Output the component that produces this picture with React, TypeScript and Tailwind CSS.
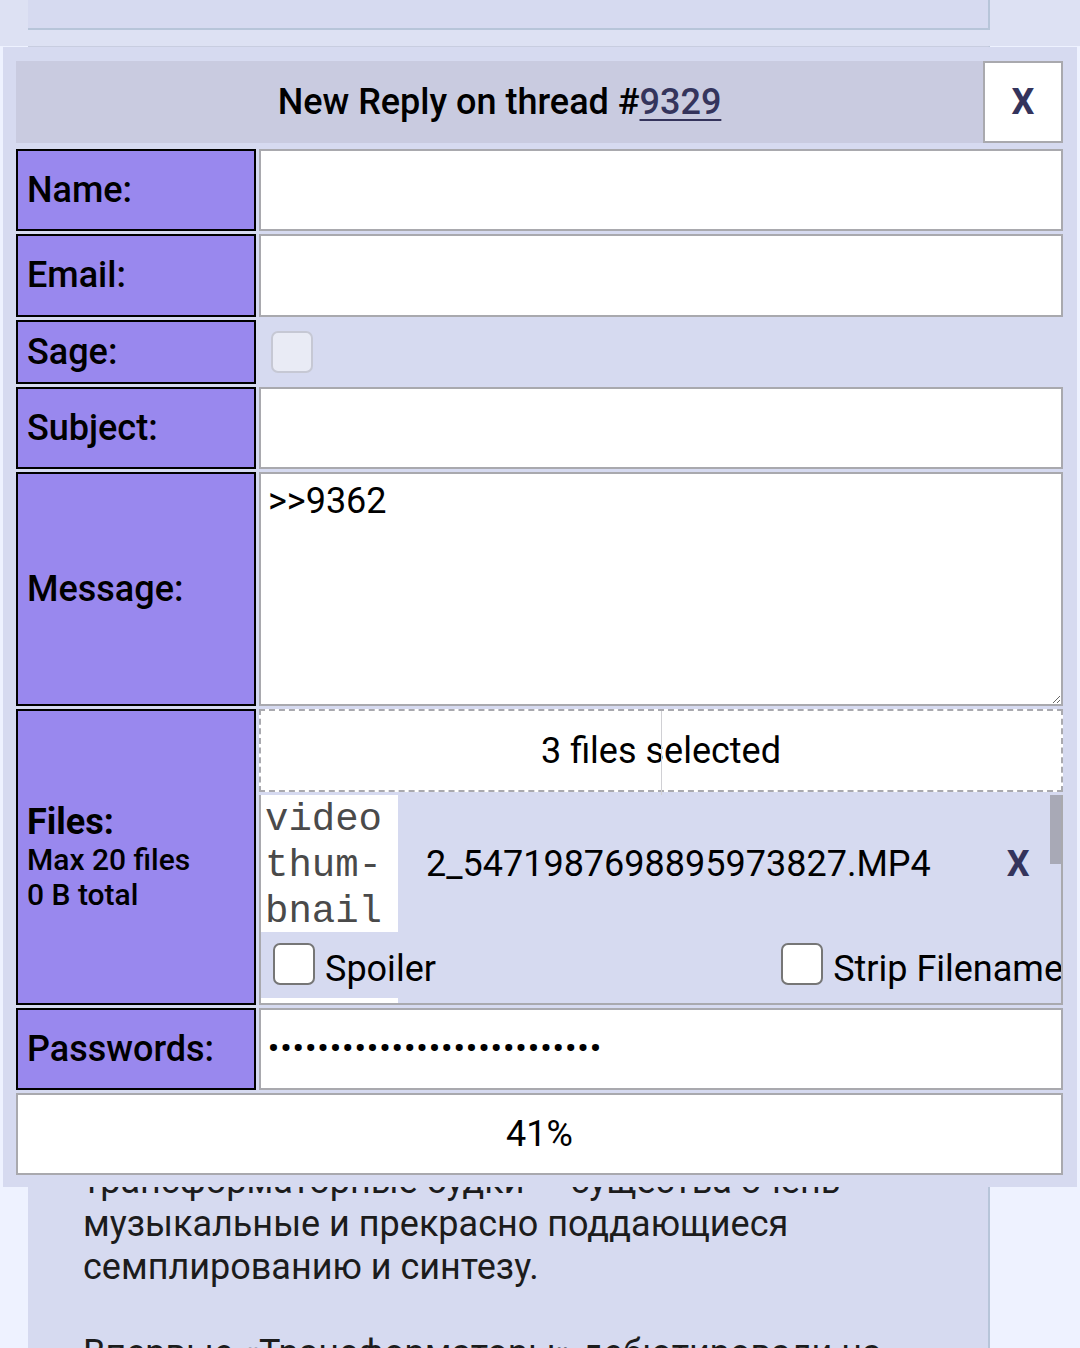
const font = { fontFamily: "Roboto, 'Noto Sans', sans-serif" };

function Label({ children, h }: { children: React.ReactNode; h: string }) {
  return (
    <div className={`${h} bg-[#9988ee] border-2 border-black px-[9px] flex flex-col justify-center text-[36px] font-medium text-black leading-tight`}>
      {children}
    </div>
  );
}

function Box({ className = "" }: { className?: string }) {
  return <div className={`bg-white border-2 border-[#a9a9ae] ${className}`} />;
}

function Check({ className = "" }: { className?: string }) {
  return <span className={`inline-block w-[42px] h-[42px] rounded-[7px] border-2 border-[#767676] bg-white shrink-0 ${className}`} />;
}

export default function App() {
  return (
    <div className="relative w-[1080px] h-[1348px] overflow-hidden bg-[#eef2ff] text-black" style={font}>
      {/* page behind the dialog */}
      <div className="bg-[#dde1f3] pb-[16px]">
        <div className="ml-[28px] w-[962px] h-[30px] bg-[#d6daf0] border-b-2 border-r-2 border-[#b7c5d9]" />
      </div>
      <div className="ml-[28px] w-[962px] h-[1302px] bg-[#d6daf0] border-t border-r-2 border-t-[#c8cde0] border-r-[#b7c5d9] pl-[55px] pt-[1113px] text-[36px] leading-[43px] text-[#1c1c1c]">
        <p>трансформаторные будки — существа очень</p>
        <p>музыкальные и прекрасно поддающиеся</p>
        <p>семплированию и синтезу.</p>
        <p>&nbsp;</p>
        <p>Впервые «Трансформаторы» дебютировали на</p>
      </div>

      {/* reply dialog */}
      <div className="absolute left-[3px] top-[47px] w-[1074px] h-[1140px] bg-[#d6daf0] pt-[14px] pl-[13px] pr-[14px]">
        <div className="flex h-[82px]">
          <div className="flex-1 bg-[#c9cbe0] flex items-center justify-center text-[36px] font-medium">
            <span>
              New Reply on thread #<span className="text-[#34345c] underline underline-offset-[5px] decoration-2">9329</span>
            </span>
          </div>
          <div className="w-[80px] bg-white border-2 border-[#a9a9ae] flex items-center justify-center text-[36px] font-bold text-[#34345c]">X</div>
        </div>

        <div className="mt-[6px] grid grid-cols-[240px_1fr] gap-x-[3px] gap-y-[3px]">
          <Label h="h-[82px]">Name:</Label>
          <Box />
          <Label h="h-[83px]">Email:</Label>
          <Box />
          <Label h="h-[64px]">Sage:</Label>
          <div className="flex items-center pl-[12px]">
            <span className="inline-block w-[42px] h-[42px] rounded-[7px] border-2 border-[#c6c8d4] bg-[#e9ebf5]" />
          </div>
          <Label h="h-[82px]">Subject:</Label>
          <Box />
          <Label h="h-[234px]">Message:</Label>
          <textarea
            readOnly
            defaultValue=">>9362"
            className="bg-white border-2 border-[#a9a9ae] px-[7px] py-[6px] text-[36px] leading-[43px] text-black outline-none"
            style={font}
          />
          <Label h="h-[296px]">
            <div className="text-[36px] font-bold leading-[40px]">Files:</div>
            <div className="text-[30px] font-medium leading-[35px]">Max 20 files</div>
            <div className="text-[30px] font-medium leading-[35px]">0 B total</div>
          </Label>
          <div className="h-[296px] flex flex-col overflow-hidden">
            <div className="relative h-[83px] shrink-0 bg-white border-2 border-dashed border-[#a9a9ae] flex items-center justify-center text-[36px]">
              3 files selected
              <span className="absolute left-1/2 top-0 h-[86px] w-px bg-[#d0d0d4]" />
            </div>
            <div className="relative mt-[3px] flex-1 min-h-0 overflow-hidden border-2 border-t-0 border-[#a9a9ae] bg-[#d6daf0]">
              <div className="flex items-center h-[137px]">
                <div
                  className="w-[137px] h-[137px] shrink-0 bg-white px-[4px] pt-[2px] text-[39px] leading-[46px] text-[#4a4a4a]"
                  style={{ fontFamily: "'Liberation Mono', 'DejaVu Sans Mono', monospace" }}
                >
                  video thum-bnail
                </div>
                <div className="ml-[28px] text-[36px]">2_5471987698895973827.MP4</div>
                <div className="ml-[76px] text-[36px] font-bold text-[#34345c]">X</div>
              </div>
              <div className="flex items-center justify-between h-[64px] pl-[12px]">
                <label className="flex items-center gap-[10px] text-[36px]">
                  <Check />
                  <span className="mt-[10px]">Spoiler</span>
                </label>
                <label className="flex items-center gap-[10px] text-[36px] whitespace-nowrap -mr-[2px]">
                  <Check />
                  <span className="mt-[10px]">Strip Filename</span>
                </label>
              </div>
              <div className="w-[137px] h-[40px] bg-white mt-[2px]" />
              <div className="absolute right-0 top-0 w-[11px] h-[69px] bg-[#a8a9b6]" />
            </div>
          </div>
          <Label h="h-[82px]">Passwords:</Label>
          <div className="bg-white border-2 border-[#a9a9ae] pl-[7px] flex items-center text-[30px] leading-[40px] tracking-[1.6px] font-bold">
            <span className="-mt-[2px]">{"•".repeat(27)}</span>
          </div>
        </div>

        <div className="mt-[3px] h-[82px] bg-white border-2 border-[#a9a9ae] flex items-center justify-center text-[36px]">
          41%
        </div>
      </div>
    </div>
  );
}
